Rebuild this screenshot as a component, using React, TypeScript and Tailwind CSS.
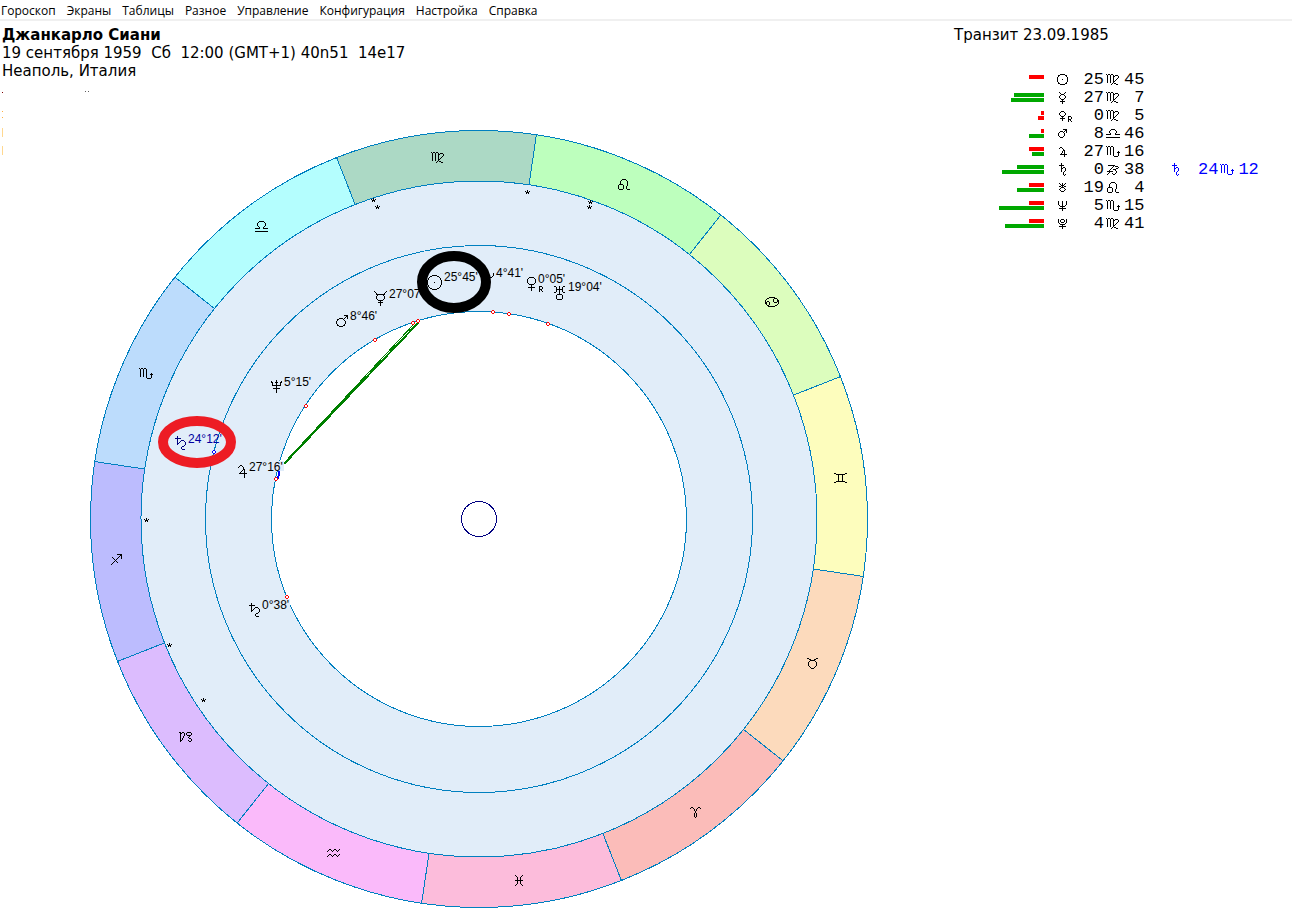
import React from 'react';

const MENU = ['Гороскоп', 'Экраны', 'Таблицы', 'Разное', 'Управление', 'Конфигурация', 'Настройка', 'Справка'];

// One string per pixel row, '#' is a filled pixel.
const GLYPHS: Record<string, string[]> = {
  sun: [
    '...#####...', '.##.....##.', '.#.......#.', '#.........#', '#.........#', '#....#....#',
    '#.........#', '#.........#', '.#.......#.', '.##.....##.', '...#####...',
  ],
  mercury: [
    '#.....#', '.#...#.', '..###..', '.#...#.', '#.....#', '#.....#',
    '.#...#.', '..###..', '...#...', '.#####.', '...#...', '...#...',
  ],
  venus: ['..###..', '.#...#.', '#.....#', '#.....#', '.#...#.', '..###..', '...#...', '.#####.', '...#...', '...#...'],
  mars: ['.....####', '.......##', '..###.#.#', '.#...#..#', '#.....#..', '#.....#..', '#.....#..', '.#...#...', '..###....'],
  jupiter: ['.##.....', '#..#....', '....#...', '....##..', '...#.#..', '...#.#..', '..#..#..', '.#######', '.....#..', '.....#..'],
  saturn: [
    '..#.....', '..#.....', '#####...', '..#.....', '..#.##..', '..##..#.', '..#...#.',
    '..#...#.', '..#..#..', '....#...', '....#...', '....#.#.', '.....#..',
  ],
  uranus: ['#..#..#', '.#.#.#.', '..###..', '##.#.##', '..###..', '.#...#.', '#.....#', '.#...#.', '..###..'],
  neptune: [
    '#...#...#', '#...#...#', '#...#...#', '#...#...#', '.#..#..#.', '..#####..', '....#....',
    '.#######.', '....#....', '....#....',
  ],
  pluto: [
    '#..###..#', '#.#...#.#', '#.#...#.#', '#..###..#', '.#.....#.', '..#####..', '....#....',
    '.#######.', '....#....', '....#....',
  ],
  retro: ['###.', '#..#', '#..#', '###.', '#.#.', '#..#'],
  sunBig: [
    '.....#####.....', '...##.....##...', '..#.........#..', '.#...........#.', '.#...........#.',
    '#.............#', '#.............#', '#......#......#', '#.............#', '#.............#',
    '.#...........#.', '.#...........#.', '..#.........#..', '...##.....##...', '.....#####.....',
  ],
  mercuryBig: [
    '#...........#', '.#.........#.', '..#.......#..', '..#########..', '...#.....#...', '..#.......#..',
    '..#.......#..', '..#.......#..', '...#.....#...', '....#####....', '......#......', '....#####....',
    '......#......', '......#......', '......#......',
  ],
  venusBig: [
    '...#####...', '..#.....#..', '.#.......#.', '.#.......#.', '.#.......#.', '.#.......#.', '..#.....#..',
    '...#####...', '.....#.....', '.....#.....', '..#######..', '.....#.....', '.....#.....', '.....#.....',
  ],
  marsBig: [
    '........####', '..........##', '.........#.#', '...####.#..#', '.##....#....', '.#......#...',
    '#........#..', '#........#..', '#........#..', '.#......#...', '.##....##...', '...####.....',
  ],
  jupiterBig: [
    '..##.....', '.#..#....', '#....#...', '.....#...', '.....##..', '....#.#..', '...#..#..', '..#...#..',
    '.########', '......#..', '......#..', '......#..', '......#..',
  ],
  saturnBig: [
    '..#........', '..#........', '######.....', '..#........', '..#...###..', '..#..#...#.', '..#.#.....#',
    '..##......#', '..#.......#', '.........#.', '.......##..', '......#....', '......#....', '.......###.',
  ],
  uranusBig: [
    '##...#...##', '..#..#..#..', '..#..#..#..', '..#######..', '..#..#..#..', '..#..#..#..', '##...#...##',
    '.....#.....', '...#####...', '..#.....#..', '..#.....#..', '..#.....#..', '..#.....#..', '...#####...',
  ],
  neptuneBig: [
    '.....#.....', '#....#....#', '##..###..##', '.#...#...#.', '.#...#...#.', '.#########.', '.....#.....',
    '.....#.....', '..#######..', '.....#.....', '.....#.....', '.....#.....', '.....#.....',
  ],
  plutoArc: ['...#', '...#', '...#', '..#.', '##..'],
  aries: [
    '.##.....##.', '#..#...#..#', '....#.#....', '....#.#....', '.....#.....', '.....#.....',
    '....#.#....', '....#.#....', '....#.#....', '....#.#....', '.....#.....',
  ],
  taurus: [
    '##.......##', '..##...##..', '...#####...', '..#.....#..', '.#.......#.', '.#.......#.',
    '.#.......#.', '.#.......#.', '..#.....#..', '...#...#...', '....###....',
  ],
  gemini: [
    '##.........##', '..#########..', '....#...#....', '....#...#....', '....#...#....', '....#...#....',
    '....#...#....', '....#...#....', '..#########..', '##.........##',
  ],
  cancer: [
    '....######....', '..##.....###..', '.#......#...#.', '#.......#...##', '#.##....#...##', '##..#....###.#',
    '##..#........#', '.#..#.......#.', '..##......##..', '...#######....',
  ],
  leo: [
    '....####....', '...#....#...', '..#......#..', '..#......#..', '..#......#..', '.####....#..',
    '#....#...#..', '#....#..#...', '#....#..#...', '#....#..#...', '.####....###',
  ],
  virgo: [
    '#.##.##.......', '.#..#..#.###..', '.#..#..##...#.', '.#..#..#....#.', '.#..#..#...#..', '.#..#..#..#...',
    '.#..#..#.#....', '.#..#..##.....', '.#..#..#......', '......#.##....', '.....#....##..',
  ],
  libra: [
    '....#####....', '...#.....#...', '..#.......#..', '..#.......#..', '..#.......#..', '...#.....#...',
    '....#...#....', '#####...#####', '.............', '.............', '#############',
  ],
  libraLow: [
    '.....####.....', '....#....#....', '...#......#...', '...#......#...', '....#....#....', '#####....#####',
    '..............', '..............', '##############',
  ],
  scorpio: [
    '#.##.##.......', '.#..#..#......', '.#..#..#......', '.#..#..#......', '.#..#..#......', '.#..#..#....#.',
    '.#..#..#...###', '.#..#..#....#.', '.#..#..#....#.', '.......#....#.', '........####..',
  ],
  sagittarius: [
    '......#####', '.........##', '........#.#', '.#.....#..#', '..#...#...#', '...#.#.....',
    '....#......', '...#.#.....', '..#...#....', '.#.........', '#..........',
  ],
  capricorn: [
    '##.##...####.', '.##..#.#....#', '.#...#.#....#', '.#...#..####.', '.#..#.....#..', '.#..#....#...',
    '.#.#......##.', '.#.#........#', '.##......#..#', '.#........##.',
  ],
  capricornAlt: [
    '.#######....', '......#.###.', '.....#.....#', '....#....##.', '...#..###...', '..#.....#...',
    '######...#..', '..#......#..', '.#...#..#...', '#.....##....',
  ],
  aquarius: [
    '..##...##...#', '.#..#.#..#.#.', '#....#....#..', '.............', '.............',
    '..##...##...#', '.#..#.#..#.#.', '#....#....#..',
  ],
  pisces: [
    '#......#', '.#....#.', '..#..#..', '..#..#..', '..#..#..', '########',
    '..#..#..', '..#..#..', '..#..#..', '.#....#.', '#......#',
  ],
  star: ['..#..', '#.#.#', '.###.', '.#.#.'],
  ring: ['.##.', '#..#', '#..#', '.##.'],
};

const glyphPath = (name: string) =>
  GLYPHS[name]
    .map((row, y) => [...row].map((c, x) => (c === '#' ? `M${x} ${y}h1v1h-1z` : '')).join(''))
    .join('');

type GlyphProps = { name: string; x: number; y: number; color?: string };

// Places a glyph with its middle at x, y.
const Glyph: React.FC<GlyphProps> = ({ name, x, y, color = '#000000' }) => {
  const rows = GLYPHS[name];
  const left = Math.floor(x - rows[0].length / 2);
  const top = Math.floor(y - rows.length / 2);
  return <path d={glyphPath(name)} transform={`translate(${left} ${top})`} fill={color} />;
};

const CX = 479;
const CY = 519;
const OUTER = 388.5;
const INNER = 338;
const LINE = '#0080c0';

const SIGNS = [
  { name: 'leo', color: '#bdffbd', x: 624, y: 185 },
  { name: 'cancer', color: '#dcfdbd', x: 772, y: 302 },
  { name: 'gemini', color: '#fdfdbd', x: 841, y: 478 },
  { name: 'taurus', color: '#fcdabc', x: 813, y: 664 },
  { name: 'aries', color: '#fbbcb9', x: 696, y: 813 },
  { name: 'pisces', color: '#fcbcdb', x: 519, y: 881 },
  { name: 'aquarius', color: '#fabafa', x: 334, y: 853 },
  { name: 'capricorn', color: '#dcbcfe', x: 186, y: 737 },
  { name: 'sagittarius', color: '#bcbcfe', x: 117, y: 560 },
  { name: 'scorpio', color: '#bcdcfc', x: 146, y: 374 },
  { name: 'libra', color: '#b4fefe', x: 262, y: 227 },
  { name: 'virgo', color: '#acd9c5', x: 438, y: 158 },
];

const PLANETS = [
  { name: 'marsBig', x: 342, y: 321, label: "8°46'", lx: 350, ly: 320 },
  { name: 'mercuryBig', x: 381, y: 299, label: "27°07'", lx: 389, ly: 298 },
  { name: 'sunBig', x: 435, y: 283, label: "25°45'", lx: 444, ly: 281 },
  { name: 'plutoArc', x: 492, y: 276, label: "4°41'", lx: 496, ly: 277 },
  { name: 'venusBig', x: 532, y: 284, label: "0°05'", lx: 538, ly: 283 },
  { name: 'uranusBig', x: 560, y: 293, label: "19°04'", lx: 568, ly: 291 },
  { name: 'neptuneBig', x: 277, y: 387, label: "5°15'", lx: 284, ly: 386 },
  { name: 'jupiterBig', x: 243, y: 472, label: "27°16'", lx: 249, ly: 471 },
  { name: 'saturnBig', x: 255, y: 610, label: "0°38'", lx: 262, ly: 609 },
];

const MARKS = [
  [413, 323], [418, 321], [493, 312], [509, 314], [548, 324], [375, 340], [306, 406], [276, 479], [287, 597],
];

const STARS = [
  [374, 200], [378, 207], [528, 192], [591, 202], [590, 207], [147, 520], [170, 645], [204, 700],
];

const polar = (radius: number, degrees: number) => {
  const a = (degrees * Math.PI) / 180;
  return `${(CX + radius * Math.sin(a)).toFixed(2)} ${(CY - radius * Math.cos(a)).toFixed(2)}`;
};

const cusp = (i: number) => 8.5 + i * 30;

const Mark: React.FC<{ x: number; y: number; color: string }> = ({ x, y, color }) => (
  <g>
    <rect x={x - 1} y={y - 1} width="2" height="2" fill="#ffffff" />
    <Glyph name="ring" x={x} y={y} color={color} />
  </g>
);

const Chart: React.FC = () => (
  <svg
    viewBox="90 130 780 780"
    className="mt-[45px] w-full max-w-[780px] font-['Liberation_Sans',Arial,sans-serif] text-[12px]"
    shapeRendering="crispEdges"
    role="img"
    aria-label="Карта"
  >
    {SIGNS.map((s, i) => (
      <path
        key={s.name}
        d={`M${CX} ${CY}L${polar(OUTER, cusp(i))}A${OUTER} ${OUTER} 0 0 1 ${polar(OUTER, cusp(i + 1))}Z`}
        fill={s.color}
      />
    ))}
    {SIGNS.map((s, i) => (
      <path key={s.name} d={`M${polar(INNER, cusp(i))}L${polar(OUTER, cusp(i))}`} stroke={LINE} />
    ))}
    <circle cx={CX} cy={CY} r={OUTER} fill="none" stroke={LINE} />
    <circle cx={CX} cy={CY} r={INNER} fill="#e1edf9" stroke={LINE} />
    <circle cx={CX} cy={CY} r="273.5" fill="none" stroke={LINE} />
    <circle cx={CX} cy={CY} r="207.5" fill="#ffffff" stroke={LINE} />
    <circle cx={CX} cy={CY} r="17.5" fill="#ffffff" stroke="#000080" />

    {SIGNS.map((s) => (
      <Glyph key={s.name} name={s.name} x={s.x} y={s.y} />
    ))}
    {STARS.map(([x, y]) => (
      <Glyph key={`${x}-${y}`} name="star" x={x} y={y} />
    ))}

    <path d="M284 464L418 323" stroke="#008000" strokeWidth="2" />
    <path d="M284 463L414 324" stroke="#008000" />
    <path d="M278 479L280 466" stroke="#0000ff" strokeWidth="2" />
    {MARKS.map(([x, y]) => (
      <Mark key={`${x}-${y}`} x={x} y={y} color="#ff0000" />
    ))}
    <Mark x={214} y={452} color="#0000ff" />

    <rect x="277" y="461" width="7" height="10" fill="#e1edf9" />
    <rect x="284" y="599" width="6" height="11" fill="#e1edf9" />
    {PLANETS.map((p) => (
      <g key={p.name}>
        <Glyph name={p.name} x={p.x} y={p.y} />
        <text x={p.lx} y={p.ly}>{p.label}</text>
      </g>
    ))}
    <Glyph name="retro" x={541} y={289} />
    <Glyph name="saturnBig" x={181} y={443} color="#000080" />
    <text x="188" y="443" fill="#0000a0">24°12'</text>

    <g fill="none" strokeWidth="10" shapeRendering="auto">
      <ellipse cx="454" cy="282" rx="32" ry="26" stroke="#000000" />
      <ellipse cx="197" cy="442" rx="34" ry="21" stroke="#ed1c24" />
    </g>
  </svg>
);

const RED = '#ff0000';
const GREEN = '#00a800';

type Transit = { deg: string; sign: string; min: string };
type Row = Transit & { planet: string; bars: [string, number][]; retro?: boolean; transit?: Transit };

const ROWS: Row[] = [
  { planet: 'sun', deg: '25', sign: 'virgo', min: '45', bars: [[RED, 15]] },
  { planet: 'mercury', deg: '27', sign: 'virgo', min: '7', bars: [[GREEN, 30], [GREEN, 33]] },
  { planet: 'venus', deg: '0', sign: 'virgo', min: '5', bars: [[RED, 3], [RED, 6]], retro: true },
  { planet: 'mars', deg: '8', sign: 'libraLow', min: '46', bars: [[RED, 3], [GREEN, 15]] },
  { planet: 'jupiter', deg: '27', sign: 'scorpio', min: '16', bars: [[RED, 15], [GREEN, 12]] },
  {
    planet: 'saturn', deg: '0', sign: 'capricornAlt', min: '38', bars: [[GREEN, 27], [GREEN, 42]],
    transit: { deg: '24', sign: 'scorpio', min: '12' },
  },
  { planet: 'uranus', deg: '19', sign: 'leo', min: '4', bars: [[RED, 15], [GREEN, 27]] },
  { planet: 'neptune', deg: '5', sign: 'scorpio', min: '15', bars: [[RED, 15], [GREEN, 45]] },
  { planet: 'pluto', deg: '4', sign: 'virgo', min: '41', bars: [[RED, 15], [GREEN, 39]] },
];

const CellGlyph: React.FC<{ name: string; color?: string; retro?: boolean }> = ({ name, color, retro }) => (
  <svg width="20" height="18" viewBox="0 0 20 18" shapeRendering="crispEdges" className="block">
    <Glyph name={name} x={9} y={9} color={color} />
    {retro && <Glyph name="retro" x={16} y={12} color={color} />}
  </svg>
);

const TransitTable: React.FC = () => (
  <table className="mt-[27px] table-fixed border-collapse font-['Liberation_Mono','Courier_New',monospace] text-[17px] leading-[18px]">
    <tbody>
      {ROWS.map((r) => (
        <tr key={r.planet} className="h-[18px]">
          <td className="w-[92px] p-0 align-top">
            <div className="flex flex-col items-end gap-px pt-1">
              {r.bars.map(([color, width], i) => (
                <div key={i} className="h-1" style={{ width, backgroundColor: color }} />
              ))}
            </div>
          </td>
          <td className="w-8 p-0 pl-[10px]"><CellGlyph name={r.planet} retro={r.retro} /></td>
          <td className="w-7 p-0 text-right">{r.deg}</td>
          <td className="w-5 p-0"><CellGlyph name={r.sign} /></td>
          <td className="w-5 p-0 text-right">{r.min}</td>
          {r.transit && (
            <>
              <td className="w-[46px] p-0 pl-[23px]"><CellGlyph name={r.planet} color="#0000ff" /></td>
              <td className="w-7 p-0 text-right text-[#0000ff]">{r.transit.deg}</td>
              <td className="w-5 p-0"><CellGlyph name={r.transit.sign} color="#0000ff" /></td>
              <td className="w-5 p-0 text-right text-[#0000ff]">{r.transit.min}</td>
            </>
          )}
        </tr>
      ))}
    </tbody>
  </table>
);

const App: React.FC = () => {
  return (
    <div className="min-h-screen bg-white text-black">
      <nav className="flex gap-[11px] border-b-2 border-[#f0f0f0] pl-px font-['Open_Sans',sans-serif] text-[12px] leading-[17px]">
        {MENU.map((item) => (
          <button key={item} type="button" className="pt-0.5">{item}</button>
        ))}
      </nav>

      <main className="flex pt-[5px] font-['DejaVu_Sans',Verdana,sans-serif] text-[15px] leading-[18px]">
        <section className="min-w-0 flex-1">
          <div className="pl-0.5 whitespace-pre">
            <h1 className="font-bold">Джанкарло Сиани</h1>
            <p>19 сентября 1959  Сб  12:00 (GMT+1) 40n51  14e17</p>
            <p>Неаполь, Италия</p>
          </div>
          <div className="flex items-start pt-[5px]">
            <svg width="90" height="70" viewBox="0 85 90 70" className="shrink-0" shapeRendering="crispEdges">
              <path d="M2 92h1v1h-1z" fill="#800000" />
              <path d="M85 91h1v1h-1zM88 91h1v1h-1z" fill="#606060" />
              <path d="M2 111h1v1h-1zM2 117h1v1h-1z" fill="#ffb040" />
              <path d="M2 128h1v9h-1zM2 146h1v9h-1z" fill="#ffd890" />
            </svg>
            <Chart />
          </div>
        </section>

        <aside className="w-[340px] shrink-0">
          <h2 className="pl-0.5">Транзит 23.09.1985</h2>
          <TransitTable />
        </aside>
      </main>
    </div>
  );
};

export default App;
